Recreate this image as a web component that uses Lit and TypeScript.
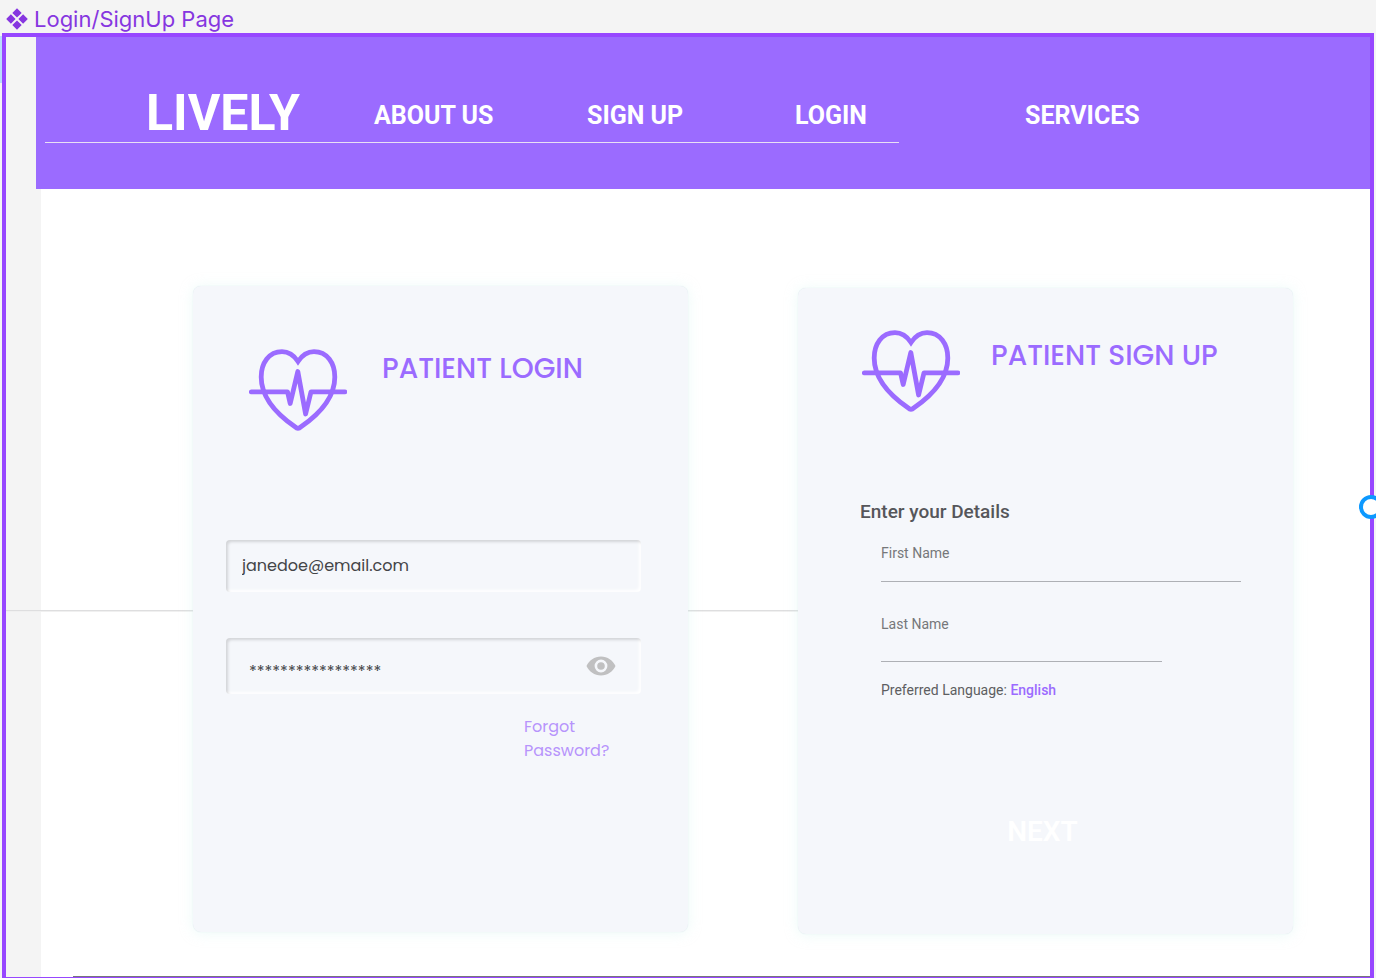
import { LitElement, html, css, svg } from "lit";
import { customElement, state } from "lit/decorators.js";

const NAV = ["About us", "Sign up", "Login", "Services"];

@customElement("heart-logo")
class HeartLogo extends LitElement {
  static styles = css`
    :host { display: block; flex: none; width: 98px; height: 82px; }
    svg { display: block; }
  `;

  render() {
    return html`
      <svg width="98" height="82" viewBox="0 0 98 82" fill="none" stroke="#9b6bff"
        stroke-width="4.8" stroke-linecap="round" stroke-linejoin="round" aria-hidden="true">
        ${svg`
          <path stroke-linejoin="miter" d="M49 12.5C45 6.5 39 2.7 33 2.7C20 2.7 12.2 14 12.2 28C12.2 48 26 64 46 77.8Q49 80.8 52 77.8C72 64 85.8 48 85.8 28C85.8 14 78 2.7 65 2.7C59 2.7 53 6.5 49 12.5Z"/>
          <path d="M2.3 42.8H38.5L41.2 54.5L48.8 22.5L56.6 65L62 42.8H95.9"/>
        `}
      </svg>
    `;
  }
}

@customElement("site-header")
class SiteHeader extends LitElement {
  static styles = css`
    :host { display: block; background: #9b6bff; color: #fff; font-family: Roboto, "Liberation Sans", sans-serif; }
    nav {
      display: grid;
      grid-template-columns: 228fr 213fr 208fr 230fr 345fr;
      align-items: end;
      padding: 47px 0 0 110px;
    }
    a { color: inherit; text-decoration: none; white-space: nowrap; }
    .brand { font-size: 50px; line-height: 58px; font-weight: 700; }
    .item { font-size: 25px; line-height: 52px; font-weight: 700; text-transform: uppercase; }
    .rule { width: 64%; height: 1px; margin: 0 0 46px 9px; border: 0; background: #e9e0f5; }
  `;

  render() {
    return html`
      <header>
        <nav aria-label="Main">
          <a class="brand" href="#home">LIVELY</a>
          ${NAV.map((n) => html`<a class="item" href="#${n.toLowerCase().replace(" ", "-")}">${n}</a>`)}
        </nav>
        <hr class="rule" />
      </header>
    `;
  }
}

const cardStyles = css`
  :host {
    display: block;
    box-sizing: border-box;
    position: relative;
    min-height: 646px;
    border-radius: 8px;
    background: #f5f7fb;
    box-shadow: 0 0 1px #d5e5e8, 0 1px 14px rgba(200, 240, 235, 0.35);
  }
  * { box-sizing: border-box; }
  .top { display: flex; align-items: flex-start; }
  h1, h2 { margin: 0; font-weight: 500; }
  h1 {
    color: #9b6bff;
    font-family: Poppins, Inter, "Liberation Sans", sans-serif;
    font-size: 28px;
    line-height: 36px;
    white-space: nowrap;
  }
  input { display: block; width: 100%; margin: 0; padding: 0; border: 0; background: none; outline: none; }
  button { padding: 0; border: 0; background: none; cursor: pointer; }
`;

@customElement("login-card")
class LoginCard extends LitElement {
  static styles = [cardStyles, css`
    :host { padding: 63px 47px 40px 33px; }
    .top { gap: 35px; padding-left: 23px; }
    h1 { padding-top: 2px; }
    form { display: flex; flex-direction: column; padding-top: 109px; }
    .box {
      display: flex;
      align-items: center;
      border-radius: 4px;
      box-shadow: inset 2px 2px 3px rgba(0, 0, 0, 0.14), inset -2px -2px 3px #fff;
    }
    .email { height: 52px; padding: 0 16px; }
    .secret { height: 56px; margin-top: 46px; padding: 0 25px 0 23px; }
    input { color: #434447; font-family: Poppins, Inter, "Liberation Sans", sans-serif; font-size: 16px; line-height: 24px; }
    .secret input { padding-top: 12px; }
    .eye { display: block; flex: none; width: 30px; height: 20px; }
    .eye svg { display: block; }
    .forgot {
      align-self: flex-end;
      width: 117px;
      margin-top: 21px;
      color: #b794fb;
      font-family: Poppins, Inter, "Liberation Sans", sans-serif;
      font-size: 16px;
      line-height: 24px;
      text-decoration: none;
    }
  `];

  render() {
    return html`
      <div class="top">
        <heart-logo></heart-logo>
        <h1>PATIENT LOGIN</h1>
      </div>
      <form>
        <div class="box email"><input type="text" inputmode="email" aria-label="Email" value="janedoe@email.com" /></div>
        <div class="box secret">
          <input type="text" autocomplete="off" aria-label="Password" value="*****************" />
          <button class="eye" type="button" aria-label="Show password">
            <svg width="30" height="20" viewBox="0 0 30 20" aria-hidden="true">
              <path fill="#c0c0c1" fill-rule="evenodd" d="M15 .5C8.500 .5 3 4.400 .5 10C3 15.600 8.500 19.500 15 19.500S27 15.600 29.500 10C27 4.400 21.500 .5 15 .5ZM15 16.400a6.400 6.400 0 1 1 0-12.800a6.400 6.400 0 0 1 0 12.800ZM15 6.200a3.800 3.800 0 1 0 0 7.600a3.800 3.800 0 0 0 0-7.600Z"/>
            </svg>
          </button>
        </div>
        <a class="forgot" href="#forgot">Forgot<br />Password?</a>
      </form>
    `;
  }
}

@customElement("signup-card")
class SignupCard extends LitElement {
  static styles = [cardStyles, css`
    :host { padding: 42px 52px 40px 62px; font-family: Roboto, "Liberation Sans", sans-serif; }
    .top { gap: 31px; padding-left: 2px; }
    h1 { padding-top: 8px; }
    form { display: flex; flex-direction: column; padding-top: 88px; }
    h2 { color: #55565a; font-size: 19px; line-height: 24px; }
    .fields { padding: 21px 0 0 21px; }
    label { display: block; color: #76777a; font-size: 14px; line-height: 16px; }
    input { height: 21px; border-bottom: 1px solid #aeb0b5; color: #55565a; font: inherit; font-size: 14px; }
    .last { padding-top: 34px; }
    .last input { width: 78%; height: 30px; }
    .language { margin: 0; padding-top: 20px; color: #5d5e61; font-size: 14px; line-height: 16px; }
    .language button { color: #9b6bff; font: inherit; font-weight: 500; }
    .actions { display: flex; justify-content: center; padding: 117px 16px 0 0; }
    .next { color: #fff; font-family: inherit; font-size: 28px; line-height: 34px; font-weight: 600; }
  `];

  @state() private language = "English";

  render() {
    return html`
      <div class="top">
        <heart-logo></heart-logo>
        <h1>PATIENT SIGN UP</h1>
      </div>
      <form>
        <h2>Enter your Details</h2>
        <div class="fields">
          <div><label for="first">First Name</label><input id="first" type="text" /></div>
          <div class="last"><label for="last">Last Name</label><input id="last" type="text" /></div>
          <p class="language">Preferred Language: <button type="button">${this.language}</button></p>
        </div>
        <div class="actions"><button class="next" type="button">NEXT</button></div>
      </form>
    `;
  }
}

@customElement("app-root")
class AppRoot extends LitElement {
  static styles = css`
    :host {
      display: flex;
      flex-direction: column;
      box-sizing: border-box;
      position: relative;
      min-height: 100vh;
      padding: 0 2px;
      overflow: hidden;
      background: #f4f4f4;
    }
    .title {
      display: flex;
      align-items: center;
      gap: 6px;
      height: 33px;
      padding: 5px 0 0 4px;
      box-sizing: border-box;
      color: #8636e0;
      font-family: Inter, "Liberation Sans", sans-serif;
      font-size: 22px;
      line-height: 28px;
    }
    .edge { position: absolute; left: 0; top: 36px; width: 2px; height: 47px; background: #b9dcfb; }
    .frame {
      position: relative;
      flex: 1;
      display: flex;
      flex-direction: column;
      border: solid #9747ff;
      border-width: 4px 4px 1px;
    }
    site-header { margin-left: 30px; }
    .page {
      flex: 1;
      display: grid;
      grid-template-columns: 1fr 1fr;
      align-items: start;
      gap: 110px;
      margin-left: 35px;
      padding: 97px 77px 42px 152px;
      background: #fff;
    }
    .divider {
      position: absolute;
      left: 0;
      right: 572px;
      top: 573px;
      height: 2px;
      margin: 0;
      border: 0;
      background: linear-gradient(#dededf 50%, #f0f0f0 50%);
    }
    signup-card { margin-top: 2px; }
    .footer { margin-left: 35px; background: #fff; }
    .base { height: 1px; margin: 0 0 0 32px; border: 0; background: #77757c; }
    .handle {
      position: absolute;
      right: -13px;
      top: 50%;
      width: 24px;
      height: 24px;
      margin-top: -12px;
      box-sizing: border-box;
      border: 4px solid #0d99ff;
      border-radius: 50%;
      background: #fff;
    }
  `;

  render() {
    return html`
      <div class="title">
        <svg width="22" height="22" viewBox="0 0 22 22" fill="#8636e0" aria-hidden="true">
          <path d="M11 .2l4.700 4.700-4.700 4.700-4.700-4.700zM4.900 6.300l4.700 4.700-4.700 4.700-4.700-4.700zM17.100 6.300l4.700 4.700-4.700 4.700-4.700-4.700zM11 12.400l4.700 4.700-4.700 4.700-4.700-4.700z" />
        </svg>
        <span>Login/SignUp Page</span>
      </div>
      <div class="edge"></div>
      <div class="frame">
        <site-header></site-header>
        <main class="page">
          <hr class="divider" />
          <login-card></login-card>
          <signup-card></signup-card>
        </main>
        <div class="footer"><hr class="base" /></div>
        <div class="handle"></div>
      </div>
    `;
  }
}
